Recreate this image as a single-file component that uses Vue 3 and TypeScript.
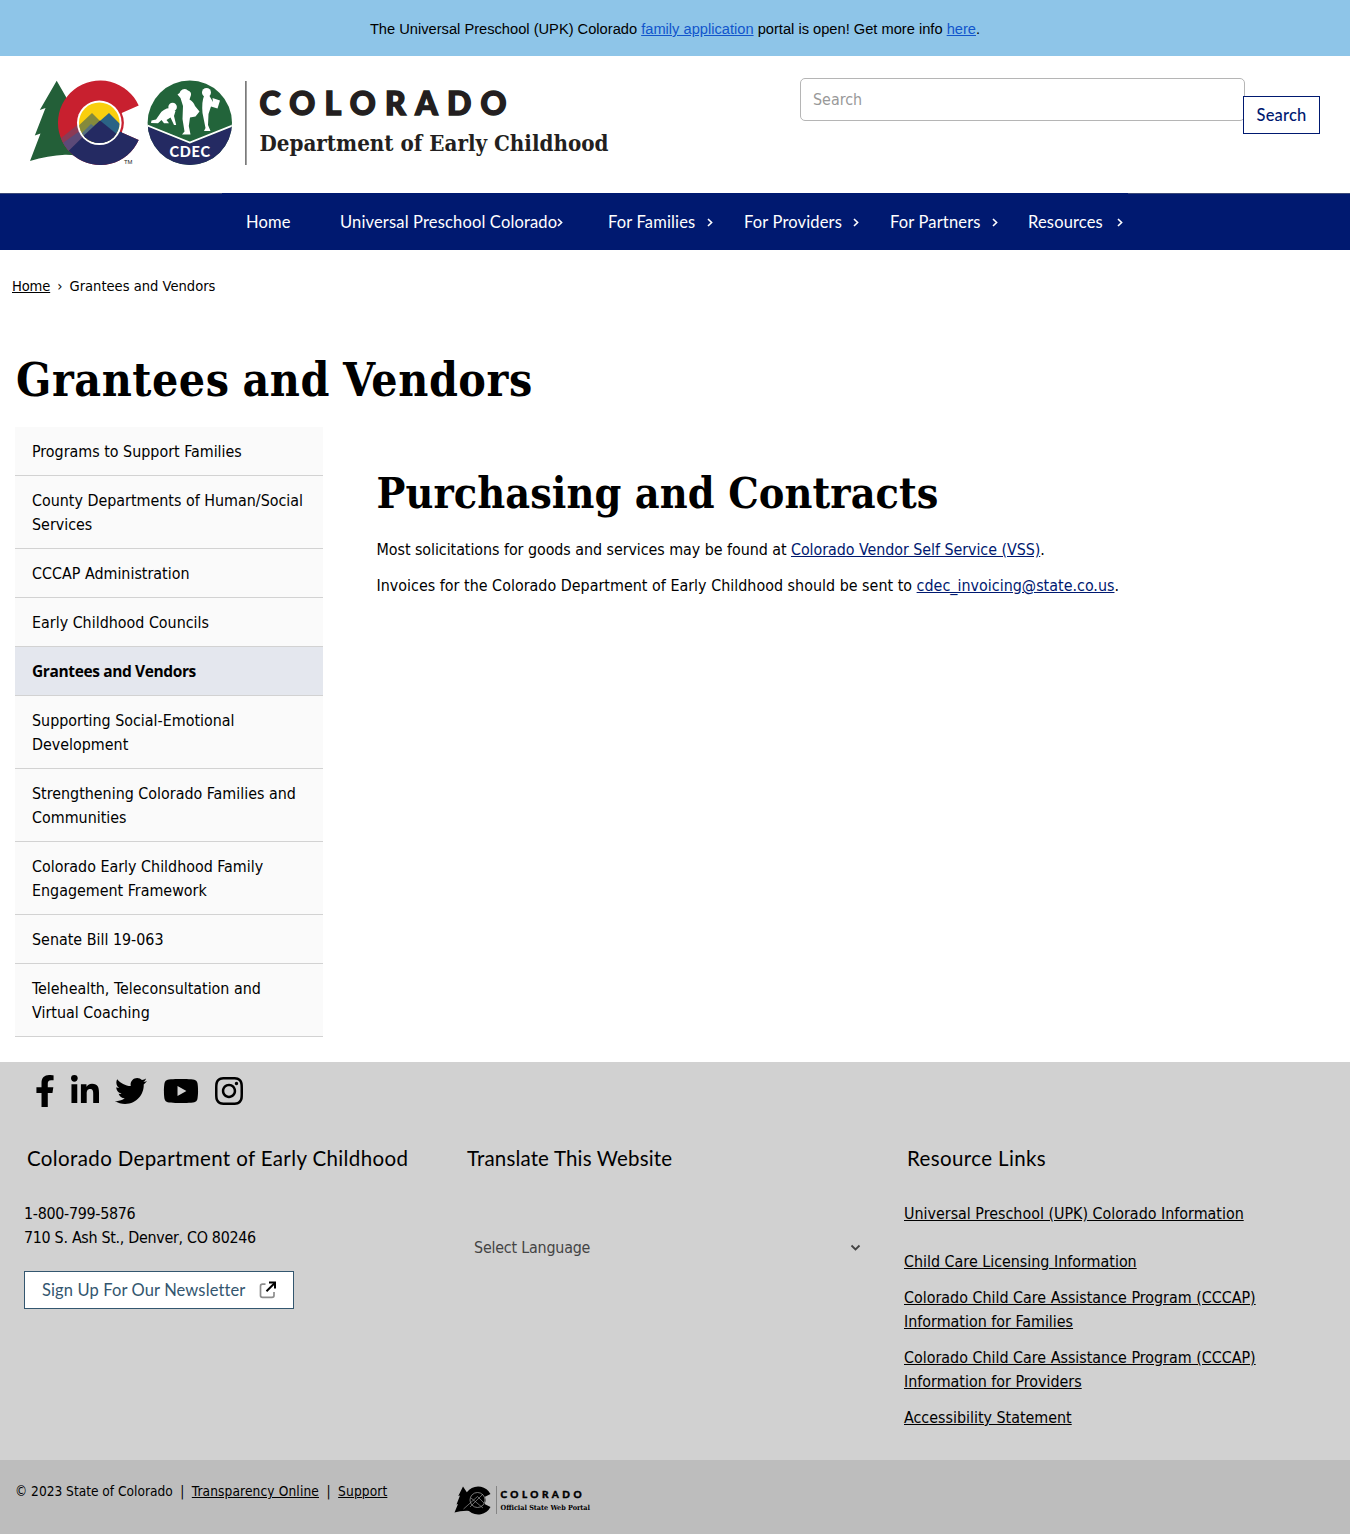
<script setup lang="ts">
interface NavItem { label: string; width: number; gap: number; menu: boolean }
interface SideItem { label: string; active?: boolean }

const nav: NavItem[] = [
  { label: 'Home', width: 94, gap: 24, menu: false },
  { label: 'Universal Preschool Colorado', width: 268, gap: 0, menu: true },
  { label: 'For Families', width: 136, gap: 12, menu: true },
  { label: 'For Providers', width: 146, gap: 11, menu: true },
  { label: 'For Partners', width: 138, gap: 11, menu: true },
  { label: 'Resources', width: 124, gap: 14, menu: true },
]

const side: SideItem[] = [
  { label: 'Programs to Support Families' },
  { label: 'County Departments of Human/Social Services' },
  { label: 'CCCAP Administration' },
  { label: 'Early Childhood Councils' },
  { label: 'Grantees and Vendors', active: true },
  { label: 'Supporting Social-Emotional Development' },
  { label: 'Strengthening Colorado Families and Communities' },
  { label: 'Colorado Early Childhood Family Engagement Framework' },
  { label: 'Senate Bill 19-063' },
  { label: 'Telehealth, Teleconsultation and Virtual Coaching' },
]

const resources: string[] = [
  'Child Care Licensing Information',
  'Colorado Child Care Assistance Program (CCCAP) Information for Families',
  'Colorado Child Care Assistance Program (CCCAP) Information for Providers',
  'Accessibility Statement',
]
</script>

<template>
  <div class="page">
    <div class="banner">
      The Universal Preschool (UPK) Colorado&nbsp;<a href="#">family application</a>&nbsp;portal is open! Get more info&nbsp;<a href="#">here</a>.
    </div>

    <header class="header">
      <svg class="logo" viewBox="30 80 590 90" width="590" height="90" role="img" aria-label="Colorado Department of Early Childhood">
        <defs>
          <clipPath id="c-shape">
            <path d="M138.7 105.600 L121.7 113 A24 24 0 0 1 121.7 132.600 L138.7 140 A42.2 42.2 0 1 1 138.7 105.600 Z" />
          </clipPath>
          <clipPath id="c-inner"><circle cx="99.3" cy="122.8" r="20.3" /></clipPath>
          <clipPath id="badge"><circle cx="189.8" cy="122.8" r="42.2" /></clipPath>
        </defs>
        <path fill="#235f38" d="M56.7 80.7 L69.5 103 L90 150 L88 159.500 Q76 154.500 65 154.800 Q48 155.500 30 161 L40.500 133.500 L34.800 135.500 L45.500 108 L39.800 110 Z" />
        <g clip-path="url(#c-shape)">
          <rect x="55" y="78" width="90" height="90" fill="#c8202f" />
          <path fill="#8c3a55" d="M55 143 L86 118 L100 122 L84 140 L66 156 Z" />
          <path fill="#5c4a78" d="M60 145 L84 128 L92 135 L67 153 Z" />
          <path fill="#242a62" d="M66 153.500 L100 120 L121 132 L145 134 V170 H75 Z" />
        </g>
        <circle cx="99.3" cy="122.8" r="22.3" fill="#fff" />
        <g clip-path="url(#c-inner)">
          <rect x="76" y="100" width="48" height="48" fill="#f9cf0e" />
          <path fill="#848a3c" d="M76 128 L92 113 L106 127 L90 146 H76 Z" />
          <path fill="#2b6385" d="M92 128 L109 113 L124 128 V146 H95 Z" />
          <path fill="#55707c" d="M78 137 L91 124 L95 127 L82 142 Z" />
          <path fill="#242a62" d="M78 141 L100 120.500 L124 140 V150 H80 Z" />
        </g>
        <text x="124" y="164" font-size="5" textLength="8.5" lengthAdjust="spacingAndGlyphs" fill="#222">TM</text>

        <g clip-path="url(#badge)">
          <rect x="147" y="80" width="86" height="86" fill="#22643a" />
          <path fill="#242a62" d="M147 126.300 L189.800 143.500 L233 126.300 V166 H147 Z" />
          <path fill="none" stroke="#fff" stroke-width="1.8" d="M147 125.300 L189.800 142.500 L233 125.300" />
        </g>
        <g fill="#fff">
          <circle cx="172.600" cy="107" r="4.300" />
          <path d="M170 108 Q163 108.500 159.500 114.500 L156 119.500 L151.500 120.500 L151 123 L158 123.300 L161.500 120 L164 123.300 H169 L166.500 120 L170.500 117.500 L174 125 L176.200 125 L174 116 L175.500 111 Z" />
          <path d="M177.500 94.500 Q180 93.500 180.500 91 Q184 87.500 188 90.500 Q191.500 91.500 191 95 L189.500 99.500 Q193.500 101.500 195 106 L199.500 111.500 L195.500 116.500 L190 117.500 L188.800 126 L190.500 134.500 H182 L184.500 131.500 L182.500 119 L183 106 L180.500 98 Z" />
          <circle cx="206.500" cy="92.500" r="4.500" />
          <path d="M204 96 H209.500 L213 102 L212.500 98 L220 100.500 L217.500 108.500 L211 106.500 L208.500 114 L208 125 L210.500 131 H204 L205.500 128 L202.500 113 Q201.500 102 204 96 Z" />
        </g>
        <text x="169.5" y="156.800" font-size="14.500" textLength="40.500" font-family="Lato" font-weight="900" fill="#fff">CDEC</text>
        <rect x="245.300" y="81" width="1.200" height="84" fill="#444" />
        <text x="259.500" y="114.500" font-size="32" textLength="247" font-family="Lato" font-weight="900" fill="#231f20" stroke="#231f20" stroke-width="1.500">COLORADO</text>
        <text x="259.500" y="151.300" font-size="22.500" textLength="349" lengthAdjust="spacingAndGlyphs" font-family="DejaVu Serif Condensed" font-weight="700" fill="#231f20">Department of Early Childhood</text>
      </svg>

      <form class="search" @submit.prevent>
        <input type="text" placeholder="Search" aria-label="Search" />
        <button type="submit">Search</button>
      </form>
    </header>

    <nav class="nav">
      <div class="nav-inner">
        <a v-for="n in nav" :key="n.label" href="#" :style="{ width: n.width + 'px' }">
          <span>{{ n.label }}</span>
          <svg v-if="n.menu" width="6" height="9" viewBox="0 0 6 9" :style="{ marginLeft: n.gap + 'px' }">
            <path d="M1 1 L4.600 4.500 L1 8" fill="none" stroke="#fff" stroke-width="1.6" />
          </svg>
        </a>
      </div>
    </nav>

    <div class="crumb"><a href="#">Home</a><i>›</i><span>Grantees and Vendors</span></div>

    <h1>Grantees and Vendors</h1>

    <main class="main">
      <ul class="side">
        <li v-for="s in side" :key="s.label" :class="{ active: s.active }"><a href="#">{{ s.label }}</a></li>
      </ul>
      <section class="content">
        <h2>Purchasing and Contracts</h2>
        <p class="solicit">Most solicitations for goods and services may be found at <a href="#">Colorado Vendor Self Service (VSS)</a>.</p>
        <p>Invoices for the Colorado Department of Early Childhood should be sent to <a href="#">cdec_invoicing@state.co.us</a>.</p>
      </section>
    </main>

    <footer class="footer">
      <div class="social">
        <svg width="20" height="32" viewBox="0 0 320 512"><path d="M279.140 288l14.220-92.660h-88.910v-60.130c0-25.350 12.420-50.060 52.240-50.060h40.420V6.260S260.430 0 225.360 0c-73.220 0-121.080 44.380-121.080 124.720v70.620H22.890V288h81.390v224h100.170V288z" /></svg>
        <svg width="28" height="32" viewBox="0 0 448 512"><path d="M100.280 448H7.400V148.900h92.880zM53.790 108.100C24.090 108.100 0 83.500 0 53.800a53.790 53.790 0 0 1 107.580 0c0 29.700-24.100 54.300-53.790 54.300zM447.900 448h-92.680V302.400c0-34.700-.7-79.200-48.290-79.200-48.290 0-55.690 37.700-55.690 76.700V448h-92.780V148.900h89.080v40.800h1.300c12.400-23.500 42.690-48.300 87.880-48.300 94 0 111.280 61.900 111.280 142.300V448z" /></svg>
        <svg width="32" height="32" viewBox="0 0 512 512"><path d="M459.370 151.716c.325 4.548.325 9.097.325 13.645 0 138.720-105.583 298.558-298.558 298.558-59.452 0-114.680-17.219-161.137-47.106 8.447.974 16.568 1.299 25.340 1.299 49.055 0 94.213-16.568 130.274-44.832-46.132-.975-84.792-31.188-98.112-72.772 6.498.974 12.995 1.624 19.818 1.624 9.421 0 18.843-1.300 27.614-3.573-48.081-9.747-84.143-51.980-84.143-102.985v-1.299c13.969 7.797 30.214 12.670 47.431 13.319-28.264-18.843-46.781-51.005-46.781-87.391 0-19.492 5.197-37.360 14.294-52.954 51.655 63.675 129.300 105.258 216.365 109.807-1.624-7.797-2.599-15.918-2.599-24.040 0-57.828 46.782-104.934 104.934-104.934 30.213 0 57.502 12.670 76.670 33.137 23.715-4.548 46.456-13.320 66.599-25.340-7.798 24.366-24.366 44.833-46.132 57.827 21.117-2.273 41.584-8.122 60.426-16.243-14.292 20.791-32.161 39.308-52.628 54.253z" /></svg>
        <svg width="36" height="32" viewBox="0 0 576 512"><path d="M549.655 124.083c-6.281-23.650-24.787-42.276-48.284-48.597C458.781 64 288 64 288 64S117.220 64 74.629 75.486c-23.497 6.322-42.003 24.947-48.284 48.597-11.412 42.867-11.412 132.305-11.412 132.305s0 89.438 11.412 132.305c6.281 23.650 24.787 41.500 48.284 47.821C117.220 448 288 448 288 448s170.780 0 213.371-11.486c23.497-6.321 42.003-24.171 48.284-47.821 11.412-42.867 11.412-132.305 11.412-132.305s0-89.438-11.412-132.305zm-317.510 213.508V175.185l142.739 81.205-142.739 81.201z" /></svg>
        <svg width="28" height="32" viewBox="0 0 448 512"><path d="M224.100 141c-63.600 0-114.900 51.300-114.900 114.900s51.300 114.900 114.900 114.900S339 319.500 339 255.900 287.700 141 224.100 141zm0 189.600c-41.100 0-74.700-33.500-74.700-74.700s33.500-74.700 74.700-74.700 74.700 33.500 74.700 74.700-33.600 74.700-74.700 74.700zm146.400-194.300c0 14.900-12 26.800-26.800 26.800-14.900 0-26.800-12-26.800-26.800s12-26.800 26.800-26.800 26.800 12 26.800 26.800zm76.100 27.200c-1.700-35.900-9.900-67.700-36.200-93.900-26.200-26.200-58-34.400-93.900-36.200-37-2.100-147.900-2.100-184.900 0-35.800 1.700-67.600 9.900-93.900 36.100s-34.400 58-36.200 93.900c-2.100 37-2.100 147.900 0 184.900 1.700 35.900 9.900 67.700 36.200 93.900s58 34.400 93.900 36.200c37 2.100 147.900 2.100 184.900 0 35.900-1.700 67.700-9.900 93.900-36.200 26.200-26.200 34.400-58 36.200-93.900 2.100-37 2.100-147.800 0-184.800zM398.800 388c-7.800 19.600-22.900 34.700-42.600 42.600-29.500 11.700-99.500 9-132.100 9s-102.700 2.600-132.100-9c-19.600-7.800-34.700-22.900-42.600-42.600-11.700-29.500-9-99.500-9-132.100s-2.600-102.700 9-132.100c7.800-19.600 22.900-34.700 42.600-42.600 29.500-11.700 99.500-9 132.100-9s102.700-2.600 132.100 9c19.600 7.800 34.700 22.900 42.600 42.600 11.700 29.500 9 99.500 9 132.100s2.700 102.700-9 132.100z" /></svg>
      </div>

      <div class="cols">
        <div class="col">
          <h3 class="wide">Colorado Department of Early Childhood</h3>
          <p class="address">1-800-799-5876<br />710 S. Ash St., Denver, CO 80246</p>
          <a class="signup" href="#">
            <span>Sign Up For Our Newsletter</span>
            <svg width="18" height="18" viewBox="0 0 18 18" fill="none">
              <path d="M6.500 3.200 H3.500 Q1.500 3.200 1.500 5.200 V14.500 Q1.500 16.300 3.500 16.300 H13 Q15 16.300 15 14.500 V11" stroke="#8d8d8d" stroke-width="1.700" />
              <path d="M7.500 10.200 L15.500 2.200" stroke="#000" stroke-width="2" />
              <path d="M10 1.500 H16 V7.500" stroke="#000" stroke-width="2" />
            </svg>
          </a>
        </div>
        <div class="col">
          <h3>Translate This Website</h3>
          <div class="select">
            <span>Select Language</span>
            <svg width="11" height="8" viewBox="0 0 11 8"><path d="M1.500 1.500 L5.500 5.500 L9.500 1.500" fill="none" stroke="#444" stroke-width="1.800" /></svg>
          </div>
        </div>
        <div class="col">
          <h3 class="wide">Resource Links</h3>
          <p class="first"><a href="#">Universal Preschool (UPK) Colorado Information</a></p>
          <p v-for="r in resources" :key="r"><a href="#">{{ r }}</a></p>
        </div>
      </div>
    </footer>

    <div class="legal">
      <div class="copy"><span>© 2023 State of Colorado</span><i>|</i><a href="#">Transparency Online</a><i>|</i><a href="#">Support</a></div>
      <svg class="portal" viewBox="454 1484 138 32" width="138" height="32" role="img" aria-label="Colorado Official State Web Portal">
        <path d="M463 1486.500 L468 1494 L472 1511 Q462 1510 454.500 1512.500 L458 1504 L456.500 1504.500 L460 1495.500 L458.300 1496 Z" />
        <path d="M490.500 1494 L484.500 1497 A8 8 0 0 1 484.500 1504 L490.500 1507 A14 14 0 1 1 490.500 1494 Z" />
        <circle cx="477.500" cy="1500" r="8" />
        <circle cx="477.500" cy="1500" r="7.500" fill="none" stroke="#aaa" stroke-width=".7" />
        <path d="M463.500 1509 L477.500 1496.500 L484 1503 M471 1498 L483 1508 M483 1494 L470 1507" fill="none" stroke="#aaa" stroke-width=".6" />
        <rect x="496" y="1486" width=".8" height="28" fill="#777" />
        <text x="500.500" y="1497.800" font-size="10" textLength="81" font-family="Lato" font-weight="900" stroke="#000" stroke-width=".4">COLORADO</text>
        <text x="500.500" y="1509.800" font-size="7" textLength="89.500" lengthAdjust="spacingAndGlyphs" font-family="DejaVu Serif Condensed" font-weight="700">Official State Web Portal</text>
      </svg>
    </div>
  </div>
</template>

<style>
body { margin: 0; background: #fff; }
</style>

<style scoped>
.page { width: 1350px; color: #000; font: 400 15.900px/24px "DejaVu Sans Condensed", "DejaVu Sans", sans-serif; }
a { color: inherit; }
h1, h2, h3, p, ul { margin: 0; padding: 0; font-weight: 400; }
i { font-style: normal; }

.banner { height: 56px; display: flex; align-items: center; justify-content: center; background: #8ec5e8; font: 14.667px/20px "Liberation Sans", sans-serif; padding-top: 2px; box-sizing: border-box; }
.banner a { color: #1155cc; }

.header { height: 137px; display: flex; justify-content: space-between; box-sizing: border-box; padding: 22px 30px 0; }
.logo { margin-top: 2px; font-family: "Liberation Sans", sans-serif; }
.search { display: flex; align-items: flex-start; }
.search input { width: 445px; height: 43px; box-sizing: border-box; border: 1px solid #b5b5b5; border-radius: 5px; padding: 0 12px 1px; font: inherit; color: #999; outline: none; background: #fff; }
.search input::placeholder { color: #999; opacity: 1; }
.search button { width: 77px; height: 38px; margin: 17.500px 0 0 -2px; padding: 0; border: 1px solid #001970; background: #fff; color: #001970; font: 500 16.500px/24px Lato, sans-serif; letter-spacing: .2px; }

.nav { height: 57px; background: #001970; border-top: 1px solid #3c4a78; box-sizing: border-box; }
.nav-inner { display: flex; width: 906px; margin: -1px auto 0; height: 57px; background: #001970; padding-left: 24px; box-sizing: border-box; }
.nav a { flex: none; display: flex; align-items: center; color: #fff; text-decoration: none; font: 16.500px/24px Lato, sans-serif; letter-spacing: .16px; white-space: nowrap; }
.nav svg { margin-top: 2px; flex: none; }

.crumb { display: flex; height: 24px; margin: 24px 0 0 12px; font-size: 14.600px; }
.crumb a { letter-spacing: -.15px; }
.crumb i { margin: 0 7px; }

h1 { margin: 47px 0 0 16px; font: 700 46px/70px "DejaVu Serif Condensed", "DejaVu Serif", serif; letter-spacing: .55px; word-spacing: -2px; height: 82px; }
.main { display: flex; align-items: flex-start; margin: 0 0 25px 15px; }
.side { flex: none; list-style: none; width: 308px; background: #fafafa; }
.side li { padding: 13px 16px 11px 17px; border-bottom: 1px solid #d2d2d2; }
.side a { text-decoration: none; display: block; }
.side .active { padding: 12px 16px 12px 17px; background: #e4e7ee; font: 700 15.500px/24px "Open Sans", sans-serif; letter-spacing: -.38px; }
.content { margin: 35px 0 0 53.500px; }
h2 { font: 700 42.700px/62px "DejaVu Serif Condensed", "DejaVu Serif", serif; height: 76px; letter-spacing: .07px; }
.content p { margin-bottom: 12px; letter-spacing: .02px; }
.content .solicit { letter-spacing: -.05px; }
.content p a { color: #001970; }

.footer { height: 398px; background: #d1d1d1; box-sizing: border-box; padding-top: 13px; }
.social { display: flex; gap: 16px; padding-left: 35.400px; height: 32px; }
.cols { display: flex; padding: 36px 0 0 24px; }
.col { width: 440px; }
h3 { font: 20.500px/30px Lato, sans-serif; letter-spacing: .16px; padding-left: 3px; height: 59px; }
.wide { letter-spacing: .37px; }
.address { letter-spacing: -.3px; }
.signup { display: flex; align-items: center; justify-content: space-between; width: 270px; height: 38px; box-sizing: border-box; border: 1px solid #33566f; background: #fff; color: #33566f; margin-top: 21px; padding: 0 16px 0 17px; text-decoration: none; font: 16.500px/24px Lato, sans-serif; letter-spacing: .12px; }
.select { display: flex; justify-content: space-between; align-items: center; width: 387px; margin: 34px 0 0 10px; color: #444; letter-spacing: -.2px; }
.col p + p { margin-top: 12px; }
.col .first + p { margin-top: 24px; }
.col p a { display: inline-block; max-width: 360px; }

.legal { height: 74px; background: #bdbdbd; display: flex; box-sizing: border-box; padding: 19px 0 0 15px; }
.copy { width: 439px; font-size: 13.600px; display: flex; }
.copy a { letter-spacing: .13px; }
.copy i { margin: 0 7.500px; }
.portal { margin-top: 5px; }
</style>
